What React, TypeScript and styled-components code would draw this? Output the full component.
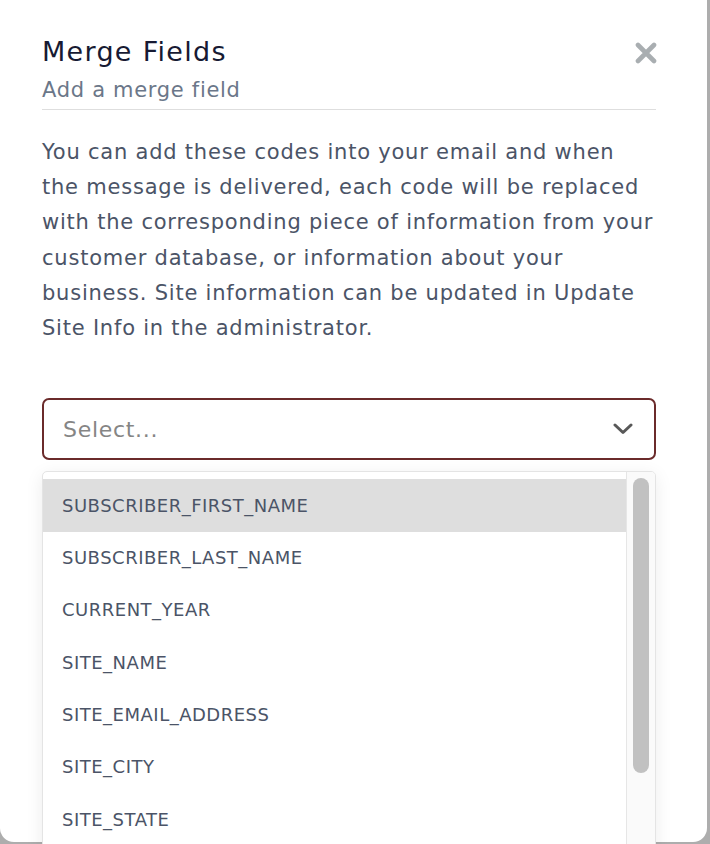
import React from "react";
import styled, { createGlobalStyle } from "styled-components";

const Global = createGlobalStyle`
  html, body { margin: 0; padding: 0; }
  body {
    background: #adadad;
    overflow: hidden;
    font-family: "DejaVu Sans", "Noto Sans", sans-serif;
  }
`;

const Page = styled.div`
  display: flex;
  width: 710px;
  height: 844px;
  overflow: hidden;
`;

const Modal = styled.div`
  width: 707px;
  height: 842px;
  box-sizing: border-box;
  background: #ffffff;
  border-radius: 0 0 14px 14px;
  padding: 34px 51px 0 42px;
  display: flex;
  flex-direction: column;
`;

const Header = styled.div`
  display: flex;
  justify-content: space-between;
  align-items: flex-start;
  padding-bottom: 5px;
  border-bottom: 1px solid #dedede;
`;

const TitleBlock = styled.div`
  display: flex;
  flex-direction: column;
  gap: 6px;
`;

const Title = styled.h2`
  margin: 0;
  font-size: 27px;
  letter-spacing: 1.3px;
  line-height: 36px;
  font-weight: 400;
  color: #171a33;
`;

const Subtitle = styled.div`
  font-size: 21px;
  letter-spacing: 0.7px;
  line-height: 28px;
  color: #6b7789;
`;

const CloseButton = styled.button`
  border: none;
  background: transparent;
  padding: 0;
  margin-top: 8px;
  margin-right: -1px;
  width: 22px;
  height: 22px;
  display: flex;
  cursor: pointer;
`;

const Text = styled.p`
  margin: 25px 0 0;
  font-size: 21px;
  letter-spacing: 0.78px;
  line-height: 35.2px;
  color: #4b5467;
  white-space: nowrap;
`;

const SelectWrap = styled.div`
  position: relative;
  margin-top: 52px;
`;

const Control = styled.div`
  height: 62px;
  box-sizing: border-box;
  border: 2px solid #6b2b2b;
  border-radius: 7px;
  display: flex;
  align-items: center;
  justify-content: space-between;
  padding: 0 21px 0 19px;
`;

const Placeholder = styled.span`
  font-size: 22px;
  letter-spacing: 0.7px;
  color: #858585;
`;

const Menu = styled.div`
  position: absolute;
  top: 73px;
  left: 0;
  right: 0;
  height: 390px;
  background: #fff;
  border: 1px solid #e4e4e4;
  border-radius: 5px;
  box-shadow: 0 4px 18px rgba(0, 0, 0, 0.08);
  overflow: hidden;
  box-sizing: border-box;
  display: flex;
`;

const OptionList = styled.div`
  flex: 1;
  padding: 7px 0;
`;

const ScrollGutter = styled.div`
  width: 28px;
  background: #fafafa;
  border-left: 1px solid #e6e6e6;
  display: flex;
  justify-content: center;
  padding-top: 6px;
`;

const ScrollThumb = styled.div`
  width: 16px;
  height: 295px;
  border-radius: 8px;
  background: #c1c1c1;
`;

const Option = styled.div<{ $active?: boolean }>`
  height: 52.3px;
  display: flex;
  align-items: center;
  padding-left: 19px;
  font-size: 18px;
  letter-spacing: 0.5px;
  color: #4b5467;
  background: ${(p) => (p.$active ? "#dedede" : "transparent")};
`;

const fields = [
  "SUBSCRIBER_FIRST_NAME",
  "SUBSCRIBER_LAST_NAME",
  "CURRENT_YEAR",
  "SITE_NAME",
  "SITE_EMAIL_ADDRESS",
  "SITE_CITY",
  "SITE_STATE",
];

const lines = [
  "You can add these codes into your email and when",
  "the message is delivered, each code will be replaced",
  "with the corresponding piece of information from your",
  "customer database, or information about your",
  "business. Site information can be updated in Update",
  "Site Info in the administrator.",
];

export default function App() {
  return (
    <>
      <Global />
      <Page>
        <Modal>
          <Header>
            <TitleBlock>
              <Title>Merge Fields</Title>
              <Subtitle>Add a merge field</Subtitle>
            </TitleBlock>
            <CloseButton aria-label="Close">
              <svg width="22" height="22" viewBox="0 0 22 22">
                <path
                  d="M3 3 L19 19 M19 3 L3 19"
                  stroke="#a9aeb1"
                  strokeWidth="4.6"
                  strokeLinecap="round"
                />
              </svg>
            </CloseButton>
          </Header>
          <Text>
            {lines.map((l, i) => (
              <React.Fragment key={i}>
                {l}
                {i < lines.length - 1 && <br />}
              </React.Fragment>
            ))}
          </Text>
          <SelectWrap>
            <Control>
              <Placeholder>Select...</Placeholder>
              <svg width="20" height="12" viewBox="0 0 20 12">
                <path
                  d="M2 2 L10 9.5 L18 2"
                  fill="none"
                  stroke="#585858"
                  strokeWidth="3"
                  strokeLinecap="round"
                  strokeLinejoin="round"
                />
              </svg>
            </Control>
            <Menu>
              <OptionList>
                {fields.map((f, i) => (
                  <Option key={f} $active={i === 0}>
                    {f}
                  </Option>
                ))}
              </OptionList>
              <ScrollGutter>
                <ScrollThumb />
              </ScrollGutter>
            </Menu>
          </SelectWrap>
        </Modal>
      </Page>
    </>
  );
}
